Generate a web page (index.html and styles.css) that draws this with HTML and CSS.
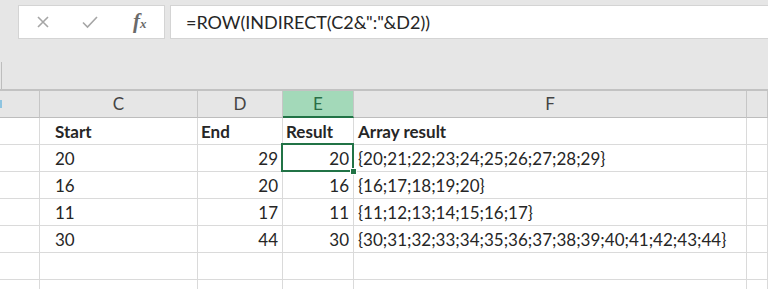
FILE: index.html
```html
<!DOCTYPE html>
<html lang="en">
<head>
    <meta charset="UTF-8">
    <meta name="viewport" content="width=device-width, initial-scale=1.0">
    <title>ROW INDIRECT example</title>
    <link rel="stylesheet" href="styles.css">
</head>
<body>
    <div class="formula-bar">
        <div class="fx-buttons">
            <svg class="icon" width="16" height="16" viewBox="0 0 16 16">
                <path d="M3 3 L13 13 M13 3 L3 13" stroke="#a6a6a6" stroke-width="1.6" fill="none"/>
            </svg>
            <svg class="icon" width="18" height="16" viewBox="0 0 18 16">
                <path d="M2 8.5 L6.5 13 L16 3" stroke="#a6a6a6" stroke-width="1.6" fill="none"/>
            </svg>
            <span class="fx">f<sub>x</sub></span>
        </div>
        <div class="formula-input">=ROW(INDIRECT(C2&amp;":"&amp;D2))</div>
    </div>

    <div class="ribbon-gap">
        <div class="gap-edge"></div>
    </div>

    <div class="sheet">
        <!-- column headers -->
        <div class="col-head"><span class="cut"></span></div>
        <div class="col-head">C</div>
        <div class="col-head">D</div>
        <div class="col-head active">E</div>
        <div class="col-head">F</div>
        <div class="col-head"></div>

        <div class="cell"></div>
        <div class="cell first bold">Start</div>
        <div class="cell bold">End</div>
        <div class="cell bold">Result</div>
        <div class="cell bold">Array result</div>
        <div class="cell"></div>

        <div class="cell"></div>
        <div class="cell first">20</div>
        <div class="cell num">29</div>
        <div class="cell num selected">20</div>
        <div class="cell">{20;21;22;23;24;25;26;27;28;29}</div>
        <div class="cell"></div>

        <div class="cell"></div>
        <div class="cell first">16</div>
        <div class="cell num">20</div>
        <div class="cell num">16</div>
        <div class="cell">{16;17;18;19;20}</div>
        <div class="cell"></div>

        <div class="cell"></div>
        <div class="cell first">11</div>
        <div class="cell num">17</div>
        <div class="cell num">11</div>
        <div class="cell">{11;12;13;14;15;16;17}</div>
        <div class="cell"></div>

        <div class="cell"></div>
        <div class="cell first">30</div>
        <div class="cell num">44</div>
        <div class="cell num">30</div>
        <div class="cell">{30;31;32;33;34;35;36;37;38;39;40;41;42;43;44}</div>
        <div class="cell"></div>

        <div class="cell"></div>
        <div class="cell"></div>
        <div class="cell"></div>
        <div class="cell"></div>
        <div class="cell"></div>
        <div class="cell"></div>

        <div class="cell"></div>
        <div class="cell"></div>
        <div class="cell"></div>
        <div class="cell"></div>
        <div class="cell"></div>
        <div class="cell"></div>
    </div>
</body>
</html>
```

FILE: styles.css
```css
body {
    font-family: 'Lato', 'Liberation Sans', sans-serif;
    margin: 0;
    padding: 0;
    background-color: #e6e6e6;
    overflow: hidden;
    color: #262626;
}

.formula-bar {
    display: flex;
    padding-top: 5px;
    height: 34px;
}

.fx-buttons {
    margin-left: 18px;
    width: 147px;
    background: #fff;
    border: 1px solid #d4d4d4;
    display: flex;
    align-items: center;
    box-sizing: border-box;
}

.fx-buttons .icon:first-child {
    margin-left: 16px;
}

.fx-buttons .icon:nth-child(2) {
    margin-left: 30px;
}

.fx {
    margin-left: 34px;
    font-family: 'Liberation Serif', serif;
    font-style: italic;
    font-weight: bold;
    font-size: 21px;
    color: #6a6a6a;
    line-height: 1;
    margin-top: -2px;
}

.fx sub {
    font-size: 13px;
    vertical-align: baseline;
    margin-left: 0;
}

.formula-input {
    flex: 1;
    margin-left: 5px;
    background: #fff;
    border: 1px solid #d4d4d4;
    border-right: none;
    box-sizing: border-box;
    padding-left: 15px;
    font-size: 18px;
    line-height: 32px;
    color: #262626;
}

.ribbon-gap {
    height: 52px;
    border-bottom: 2px solid #c2c2c2;
    box-sizing: border-box;
    padding-top: 23px;
}

.gap-edge {
    margin-left: 1px;
    height: 27px;
    border-left: 1px solid #bdbdbd;
}

.sheet {
    display: grid;
    grid-template-columns: 40px 158px 85px 71px 393px 21px;
    grid-template-rows: 27px repeat(7, 27px);
    background: #fff;
}

.col-head {
    background: #e6e6e6;
    border-right: 1px solid #c6c6c6;
    border-bottom: 1px solid #bdbdbd;
    text-align: center;
    font-size: 17px;
    line-height: 26px;
    color: #444;
    overflow: hidden;
}

.col-head .cut {
    display: block;
    width: 2px;
    height: 8px;
    margin-top: 9px;
    background: #8ec4e0;
}

.col-head.active {
    background: #a3d9b9;
    color: #2a6e46;
    border-bottom: 2px solid #217346;
    line-height: 25px;
}

.cell {
    border-right: 1px solid #dadada;
    border-bottom: 1px solid #dadada;
    padding: 0 4px 0 3px;
    font-size: 17px;
    line-height: 28px;
    white-space: nowrap;
}

.cell.first {
    padding-left: 15px;
}

.cell:nth-child(6n+5) {
    padding-left: 4px;
}

.cell.bold {
    font-weight: bold;
}

.cell.num {
    text-align: right;
    padding-right: 4px;
}

.selected {
    position: relative;
    padding-right: 9px;
}

.selected::after {
    content: "";
    position: absolute;
    left: -2px;
    top: -2px;
    right: -1px;
    bottom: -1px;
    border: 2px solid #217346;
}

.selected::before {
    content: "";
    position: absolute;
    right: -4px;
    bottom: -4px;
    width: 5px;
    height: 5px;
    background: #217346;
    border: 1px solid #fff;
    z-index: 1;
}
```
